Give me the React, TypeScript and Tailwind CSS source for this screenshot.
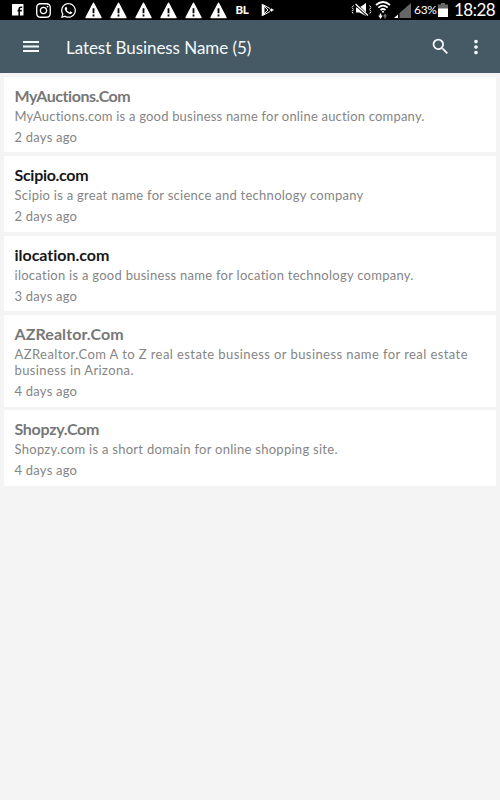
import React from "react";
import { FaInstagram, FaWhatsapp } from "react-icons/fa";
import { MdMoreVert, MdSearch } from "react-icons/md";

function Warning() {
  return (
    <svg viewBox="0 0 17 17" className="h-[17px] w-[17px] shrink-0">
      <path d="M8.5 1.2 16 15.6H1Z" fill="#fff" stroke="#fff" strokeWidth="1.4" strokeLinejoin="round" />
      <path d="M8.5 6.2v5M8.5 12.6v2" stroke="#000" strokeWidth="1.8" />
    </svg>
  );
}

function StatusBar() {
  return (
    <div className="flex h-5 items-center overflow-hidden bg-black pl-3 text-white">
      <svg viewBox="0 0 12 12" className="mr-[10.5px] h-3 w-3 shrink-0">
        <rect width="11.5" height="11.5" rx=".6" fill="#fff" />
        <path d="M7.2 12V4.9q0-1.7 1.7-1.7h1.3M5.5 6.6h4.3" fill="none" stroke="#000" strokeWidth="1.6" />
      </svg>
      <FaInstagram className="mr-[8px] h-[17px] w-[17px] shrink-0" />
      <FaWhatsapp className="mr-[8px] h-[17px] w-[17px] shrink-0" />
      <div className="flex gap-2">
        <Warning />
        <Warning />
        <Warning />
        <Warning />
        <Warning />
        <Warning />
      </div>
      <span className="ml-[9px] w-[25.500px] text-[11.500px] leading-5 font-black tracking-[-0.3px]">BL</span>
      <svg viewBox="0 0 14 14" className="h-[14px] w-[14px] shrink-0" fill="none" stroke="#fff" strokeWidth="1" strokeLinejoin="round">
        <path d="M1 1.200v11.600L3.200 10.500v-7Z" fill="#fff" strokeWidth=".5" />
        <path d="M1.300 1.300 9 5.500M1.300 12.700 9 8.500M2 2.200 7 7l-5 4.800" />
        <path d="m10.200 5.600 2.400 1.400-2.400 1.400L8.900 7Z" fill="#fff" strokeWidth=".4" />
      </svg>
      <div className="ml-auto flex h-5 items-center">
        <svg viewBox="0 0 21 16" className="mr-[3px] h-4 w-[21px]" fill="none" stroke="#fff">
          <path d="M5 5.500h3.500L15 1v13L8.500 10.500H5Z" fill="#fff" stroke="none" />
          <path d="M4 1.500 17 14" stroke="#000" strokeWidth="2.600" />
          <path d="M4.500 2 17 13.500" strokeWidth="1.300" />
          <path d="M2.500 3.500 1 5.500l1.500 2L1 9.500l1.500 2.500M18.500 3.500 20 5.500l-1.500 2 1.500 2-1.500 2.500" strokeWidth="1" strokeDasharray="2 .6" />
        </svg>
        <svg viewBox="0 0 16 19" className="mr-[3px] h-[19px] w-4" fill="none" stroke="#fff" strokeWidth="1.700">
          <path d="M1 4q7-6 14 0M3.300 6.600q4.700-4 9.400 0M5.500 9q2.500-2 5 0" />
          <circle cx="8" cy="10.700" r="1" fill="#fff" stroke="none" />
          <path d="M5.500 12.500v3" strokeWidth="1.400" />
          <path d="M3.300 14.500h4.400L5.500 18Z" fill="#fff" stroke="none" />
          <path d="M10 15v2.500" stroke="#777" strokeWidth="1.400" />
          <path d="M8 15.500h4L10 12.500Z" fill="#777" stroke="none" />
        </svg>
        <svg viewBox="0 0 17 15" className="mr-[3px] h-[15px] w-[17px]">
          <path d="M17 0v15H5.500V10Z" fill="#666" />
          <path d="M4 11.500V15H0Z" fill="#fff" />
        </svg>
        <span className="w-6 whitespace-nowrap text-[12px] leading-5 tracking-[-0.3px]">63%</span>
        <svg viewBox="0 0 10 14" className="mr-[6px] h-[14px] w-[10px]">
          <path d="M3 0h4v1.500h3V14H0V1.500h3Z" fill="#666" />
          <path d="M0 5.500h10V14H0Z" fill="#fff" />
        </svg>
        <span className="w-[46px] whitespace-nowrap text-[17px] leading-5 tracking-[-0.5px]">18:28</span>
      </div>
    </div>
  );
}

function Card({ title, titleClass, lines, age }: {
  title: string;
  titleClass: string;
  lines: { text: string; className: string }[];
  age: string;
}) {
  return (
    <article className="bg-white pt-[9px] pr-2 pb-[7.600px] pl-[10.500px] text-[13px] leading-4 whitespace-nowrap text-[#858585]">
      <h2 className={`mb-[2px] text-[16px] leading-5 font-bold ${titleClass}`}>{title}</h2>
      {lines.map((line) => (
        <p key={line.text} className={`h-[15.900px] ${line.className}`}>{line.text}</p>
      ))}
      <p className="mt-[5px] h-4 tracking-[0.22px]">{age}</p>
    </article>
  );
}

export default function App() {
  return (
    <div className="h-[800px] w-[500px] overflow-hidden bg-[#f4f4f4] font-[Lato,'Open_Sans',sans-serif]">
      <StatusBar />
      <header className="flex h-[53px] items-center bg-[#455a64] text-[#f5f8fa]">
        <svg viewBox="0 0 16 11" className="ml-[22.500px] h-[11px] w-4" fill="none" stroke="currentColor" strokeWidth="1.800">
          <path d="M0 1h16M0 5.500h16M0 10h16" />
        </svg>
        <h1 className="ml-[27.500px] pt-[2px] text-[17px] leading-6 whitespace-nowrap tracking-[-0.06px]">Latest Business Name (5)</h1>
        <MdSearch className="ml-auto h-[21px] w-[21px]" />
        <MdMoreVert className="mr-[13.500px] ml-[13.500px] h-[22px] w-[22px]" />
      </header>
      <main className="flex flex-col gap-[3.900px] px-1 pt-[4px]">
        <Card title="MyAuctions.Com" titleClass="text-[#777] tracking-[-0.45px]"
          lines={[{ text: "MyAuctions.com is a good business name for online auction company.", className: "tracking-[0.2px]" }]} age="2 days ago" />
        <Card title="Scipio.com" titleClass="text-[#171717] tracking-[-0.3px]"
          lines={[{ text: "Scipio is a great name for science and technology company", className: "tracking-[0.27px]" }]} age="2 days ago" />
        <Card title="ilocation.com" titleClass="text-[#171717] tracking-[-0.02px]"
          lines={[{ text: "ilocation is a good business name for location technology company.", className: "tracking-[0.27px]" }]} age="3 days ago" />
        <Card title="AZRealtor.Com" titleClass="text-[#777] tracking-[0.08px]"
          lines={[
            { text: "AZRealtor.Com A to Z real estate business or business name for real estate", className: "tracking-[0.42px]" },
            { text: "business in Arizona.", className: "tracking-[0.38px]" },
          ]} age="4 days ago" />
        <Card title="Shopzy.Com" titleClass="text-[#777] tracking-[-0.3px]"
          lines={[{ text: "Shopzy.com is a short domain for online shopping site.", className: "tracking-[0.28px]" }]} age="4 days ago" />
      </main>
    </div>
  );
}
